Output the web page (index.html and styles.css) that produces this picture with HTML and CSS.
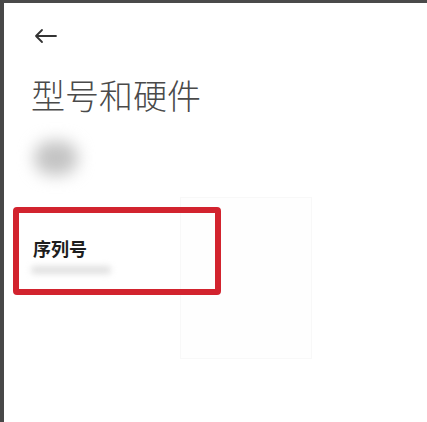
FILE: index.html
```html
<!DOCTYPE html>
<html lang="zh">
<head>
<meta charset="utf-8">
<link rel="stylesheet" href="styles.css">
</head>
<body>
<div class="frame">
  <div class="faint"></div>
  <div class="topbar">
    <svg class="back" width="24" height="16" viewBox="0 0 24 16" fill="none" stroke="#333" stroke-width="1.8" stroke-linecap="round" stroke-linejoin="round">
      <path d="M22 8H2M8 2L2 8l6 6"/>
    </svg>
  </div>
  <h1 class="title">型号和硬件</h1>
  <div class="blob"></div>
  <div class="highlight">
    <div class="label">序列号</div>
    <div class="value-blur"></div>
  </div>
</div>
</body>
</html>
```
FILE: styles.css
```css
html, body {
  margin: 0;
  padding: 0;
  background: #ffffff;
}
body {
  width: 427px;
  height: 422px;
  overflow: hidden;
  font-family: "Noto Sans CJK SC", "Noto Sans", sans-serif;
}
.frame {
  position: relative;
  box-sizing: border-box;
  width: 427px;
  height: 422px;
  border-left: 4px solid #484848;
  border-top: 3px solid #4a4a4a;
  background: #fff;
  padding-left: 8px;
}
.topbar {
  height: 40px;
  padding-top: 25px;
  padding-left: 22px;
  box-sizing: border-box;
  display: flex;
  align-items: flex-start;
}
.back {
  display: block;
}
.title {
  margin: 32px 0 0 19px;
  font-size: 34px;
  font-weight: 300;
  color: #4a4a4a;
  line-height: 40px;
  letter-spacing: 0;
}
.blob {
  width: 44px;
  height: 34px;
  margin: 26px 0 0 22px;
  border-radius: 17px;
  background: #c4c4c4;
  filter: blur(8px);
}
.highlight {
  margin-top: 32px;
  margin-left: 1px;
  width: 208px;
  height: 88px;
  box-sizing: border-box;
  border: 6px solid #d2232e;
  border-radius: 4px;
  padding: 24px 0 0 14px;
  position: relative;
  z-index: 1;
}
.label {
  font-size: 18px;
  font-weight: 700;
  color: #1e1e1e;
  line-height: 22px;
}
.value-blur {
  margin-top: 7px;
  margin-left: -2px;
  width: 80px;
  height: 8px;
  background: #e0e0e0;
  filter: blur(3px);
  border-radius: 4px;
}
.faint {
  position: absolute;
  left: 176px;
  top: 194px;
  width: 130px;
  height: 160px;
  border: 1px solid #f8f8f8;
  background: #fefefe;
}
```
